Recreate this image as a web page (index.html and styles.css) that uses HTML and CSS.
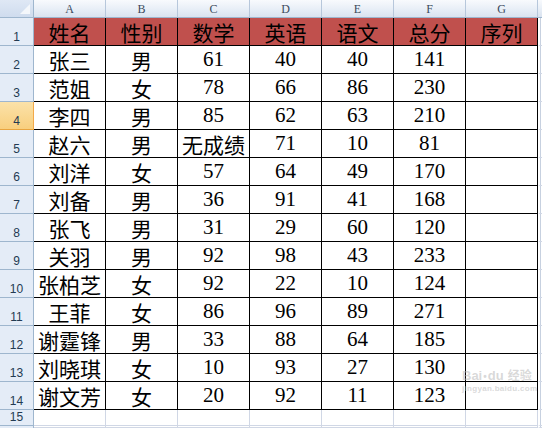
FILE: index.html
```html
<!DOCTYPE html>
<html>
<head>
<meta charset="utf-8">
<link rel="stylesheet" href="styles.css">
</head>
<body>
<div class="sheet">
  <div class="corner"><span class="tri"></span></div>
  <div class="ch">A</div><div class="ch">B</div><div class="ch">C</div><div class="ch">D</div><div class="ch">E</div><div class="ch">F</div><div class="ch">G</div><div class="ch last"></div>

  <div class="rh">1</div>
  <div class="c hd">姓名</div><div class="c hd">性别</div><div class="c hd">数学</div><div class="c hd">英语</div><div class="c hd">语文</div><div class="c hd">总分</div><div class="c hd">序列</div><div class="e"></div>

  <div class="rh">2</div>
  <div class="c">张三</div><div class="c">男</div><div class="c n">61</div><div class="c n">40</div><div class="c n">40</div><div class="c n">141</div><div class="c"></div><div class="e"></div>

  <div class="rh">3</div>
  <div class="c">范姐</div><div class="c">女</div><div class="c n">78</div><div class="c n">66</div><div class="c n">86</div><div class="c n">230</div><div class="c"></div><div class="e"></div>

  <div class="rh sel">4</div>
  <div class="c">李四</div><div class="c">男</div><div class="c n">85</div><div class="c n">62</div><div class="c n">63</div><div class="c n">210</div><div class="c"></div><div class="e"></div>

  <div class="rh">5</div>
  <div class="c">赵六</div><div class="c">男</div><div class="c">无成绩</div><div class="c n">71</div><div class="c n">10</div><div class="c n">81</div><div class="c"></div><div class="e"></div>

  <div class="rh">6</div>
  <div class="c">刘洋</div><div class="c">女</div><div class="c n">57</div><div class="c n">64</div><div class="c n">49</div><div class="c n">170</div><div class="c"></div><div class="e"></div>

  <div class="rh">7</div>
  <div class="c">刘备</div><div class="c">男</div><div class="c n">36</div><div class="c n">91</div><div class="c n">41</div><div class="c n">168</div><div class="c"></div><div class="e"></div>

  <div class="rh">8</div>
  <div class="c">张飞</div><div class="c">男</div><div class="c n">31</div><div class="c n">29</div><div class="c n">60</div><div class="c n">120</div><div class="c"></div><div class="e"></div>

  <div class="rh">9</div>
  <div class="c">关羽</div><div class="c">男</div><div class="c n">92</div><div class="c n">98</div><div class="c n">43</div><div class="c n">233</div><div class="c"></div><div class="e"></div>

  <div class="rh">10</div>
  <div class="c">张柏芝</div><div class="c">女</div><div class="c n">92</div><div class="c n">22</div><div class="c n">10</div><div class="c n">124</div><div class="c"></div><div class="e"></div>

  <div class="rh">11</div>
  <div class="c">王菲</div><div class="c">女</div><div class="c n">86</div><div class="c n">96</div><div class="c n">89</div><div class="c n">271</div><div class="c"></div><div class="e"></div>

  <div class="rh">12</div>
  <div class="c">谢霆锋</div><div class="c">男</div><div class="c n">33</div><div class="c n">88</div><div class="c n">64</div><div class="c n">185</div><div class="c"></div><div class="e"></div>

  <div class="rh">13</div>
  <div class="c">刘晓琪</div><div class="c">女</div><div class="c n">10</div><div class="c n">93</div><div class="c n">27</div><div class="c n">130</div><div class="c"></div><div class="e"></div>

  <div class="rh">14</div>
  <div class="c">谢文芳</div><div class="c">女</div><div class="c n">20</div><div class="c n">92</div><div class="c n">11</div><div class="c n">123</div><div class="c"></div><div class="e"></div>

  <div class="rh">15</div>
  <div class="g"></div><div class="g"></div><div class="g"></div><div class="g"></div><div class="g"></div><div class="g"></div><div class="g"></div><div class="e"></div>

  <div class="rh tail"></div>
  <div class="g"></div><div class="g"></div><div class="g"></div><div class="g"></div><div class="g"></div><div class="g"></div><div class="g"></div><div class="e"></div>

  <div class="mark">
    <div class="mark-top"><span class="bai">Bai</span><span class="paw">&#x2022;</span><span class="du">du</span><span class="jy">经验</span></div>
    <div class="mark-url">jingyan.baidu.com</div>
  </div>
</div>
</body>
</html>
```
FILE: styles.css
```css
html, body {
  margin: 0;
  padding: 0;
  background: #ffffff;
}

.sheet {
  position: relative;
  display: grid;
  grid-template-columns: 34px repeat(7, 72px) 1fr;
  grid-template-rows: 18px repeat(14, 28px) 16px 1fr;
  width: 542px;
  height: 428px;
  overflow: hidden;
  font-family: "Liberation Serif", "Noto Sans CJK SC", serif;
}

.corner {
  position: relative;
  background: linear-gradient(#dfe8f5, #cfdcee);
  border-right: 1px solid #9eb6ce;
  border-bottom: 1px solid #9eb6ce;
  box-sizing: border-box;
}

.tri {
  position: absolute;
  right: 3px;
  bottom: 3px;
  width: 0;
  height: 0;
  border-left: 10px solid transparent;
  border-bottom: 10px solid #f4f7fb;
}

.ch {
  background: linear-gradient(#f8fafd, #e6edf6 60%, #dae3ef);
  border-right: 1px solid #b7c7db;
  border-bottom: 1px solid #9eb6ce;
  box-sizing: border-box;
  font-family: "Liberation Serif", serif;
  font-size: 12px;
  color: #3b4a5c;
  display: flex;
  justify-content: center;
  align-items: center;
  padding-top: 1px;
}

.ch.last {
  border-right: none;
}

.rh {
  background: #e4ecf7;
  border-right: 1px solid #9eb6ce;
  border-bottom: 1px solid #9eb6ce;
  box-sizing: border-box;
  font-family: "Liberation Sans", sans-serif;
  font-size: 12px;
  color: #233a52;
  display: flex;
  justify-content: center;
  align-items: flex-end;
  padding-bottom: 1px;
}

.rh.sel {
  background: linear-gradient(#fbe2a9, #f8cf7e);
  border-right-color: #f2a94a;
  border-bottom-color: #e8a540;
}

.c {
  border-right: 1px solid #000000;
  border-bottom: 1px solid #000000;
  box-sizing: border-box;
  font-family: "Noto Sans CJK SC", sans-serif;
  font-size: 21px;
  line-height: 24px;
  color: #000000;
  display: flex;
  justify-content: center;
  align-items: flex-end;
  white-space: nowrap;
  padding-bottom: 1px;
}

.c.n {
  font-family: "Liberation Serif", serif;
  font-size: 21px;
  padding-bottom: 2px;
}

.c.hd {
  background: #c0504d;
}

.g {
  border-right: 1px solid #d0d7e5;
  border-bottom: 1px solid #d0d7e5;
  box-sizing: border-box;
}

.e {
  border-bottom: 1px solid #d0d7e5;
  box-sizing: border-box;
  border-left: 2px solid #ffffff;
  position: relative;
}

.e::after {
  content: "";
  position: absolute;
  left: 0;
  top: 0;
  bottom: 0;
  border-left: 1px solid #c7d1e0;
}

.rh.tail {
  border-bottom: none;
}

.mark {
  position: absolute;
  left: 462px;
  top: 366px;
  width: 74px;
  color: rgba(185, 185, 185, 0.55);
  pointer-events: none;
}

.mark-top {
  display: flex;
  align-items: baseline;
  gap: 1px;
  font-family: "Liberation Sans", sans-serif;
  font-weight: bold;
  font-size: 13px;
}

.jy {
  font-family: "Noto Sans CJK SC", sans-serif;
  font-size: 12px;
  margin-left: 3px;
}

.paw {
  font-size: 10px;
}

.mark-url {
  font-family: "Liberation Sans", sans-serif;
  font-weight: bold;
  font-size: 8px;
  letter-spacing: 0.3px;
  margin-top: 1px;
}
```
